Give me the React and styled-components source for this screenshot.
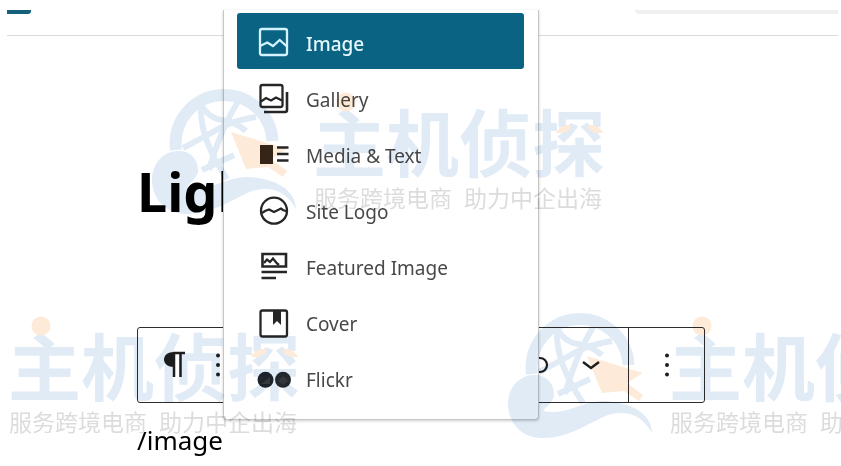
import React from "react";
import styled, { createGlobalStyle, css } from "styled-components";

const GlobalStyle = createGlobalStyle`
  *, *::before, *::after { box-sizing: border-box; }
  body {
    margin: 0;
    background: #fff;
    color: #1e1e1e;
    font-family: "Noto Sans", "Open Sans", sans-serif;
  }
`;

const Page = styled.div`
  position: relative;
  min-height: 100vh;
  padding: 10px 3px 0 7px;
  overflow: hidden;
`;

const TopBar = styled.header`
  display: flex;
  justify-content: space-between;
  align-items: flex-start;
  height: 26px;
  border-bottom: 1px solid #dadada;
`;

const InserterEdge = styled.div`
  width: 24px;
  height: 4px;
  background: #17607c;
  border-bottom-right-radius: 3px;
`;

const SearchEdge = styled.div`
  width: 203px;
  height: 4px;
  background: #f0f0f0;
  border-bottom-left-radius: 4px;
`;

const Editor = styled.main`
  display: flex;
  flex-direction: column;
  padding: 120px 133px 0 130px;
`;

const Title = styled.h1`
  margin: 0;
  font-size: 54px;
  line-height: 70px;
  font-weight: 700;
  color: #000;
`;

const Toolbar = styled.div`
  display: flex;
  height: 76px;
  margin-top: 101px;
  border: 1px solid #2c2c2c;
  border-radius: 3px;
`;

const ToolGroup = styled.div`
  display: flex;
  flex: ${(p) => (p.$grow ? 1 : "none")};
  ${(p) =>
    p.$divided &&
    css`
      border-left: 1px solid #2c2c2c;
    `}
`;

const ToolButton = styled.button`
  display: flex;
  align-items: center;
  justify-content: center;
  width: ${(p) => p.$width}px;
  padding: 0;
  border: 0;
  background: none;
  color: #1e1e1e;
  margin-left: ${(p) => (p.$push ? "auto" : "0")};
`;

const BlockInput = styled.input`
  width: 100%;
  height: 40px;
  margin-top: 17px;
  padding: 0;
  border: 0;
  outline: 0;
  background: none;
  color: #000;
  font-family: inherit;
  font-size: 26px;
  line-height: 40px;
`;

const Menu = styled.div`
  position: absolute;
  top: 10px;
  left: 223px;
  width: 316px;
  padding: 3px 14px 14px 13px;
  background: #fff;
  border: 1px solid #c6c6c6;
  border-top: 0;
  border-radius: 0 0 4px 4px;
  box-shadow: 0 1px 3px rgba(0, 0, 0, 0.2);
`;

const MenuItem = styled.button`
  display: flex;
  align-items: center;
  gap: 14px;
  width: 100%;
  height: 56px;
  padding: 0 19px;
  border: 0;
  border-radius: 3px;
  background: ${(p) => (p.$active ? "#0b6384" : "transparent")};
  color: ${(p) => (p.$active ? "#e6f8ff" : "#484848")};
  font-family: inherit;
  font-size: 19px;
  font-weight: ${(p) => (p.$active ? 500 : 400)};
  line-height: 26px;
  text-align: left;
`;

const ItemIcon = styled.svg`
  flex: none;
  width: 36px;
  height: 36px;
  color: ${(p) => (p.$active ? "#d3f4ff" : "#262626")};
  fill: none;
  stroke: currentColor;
  stroke-width: 2.3;
`;

const ItemLabel = styled.span`
  padding-top: 6px;
`;

const MarkLayer = styled.div`
  position: absolute;
  inset: 0;
  overflow: hidden;
  pointer-events: none;
`;

const Watermark = styled.div`
  position: absolute;
  top: ${(p) => p.$top}px;
  left: ${(p) => p.$left}px;
  display: flex;
  gap: 16px;
  opacity: 0.85;
  mix-blend-mode: multiply;
`;

const Emblem = styled.svg`
  width: 145px;
  height: 128px;
`;

const Brand = styled.div`
  position: relative;
  display: flex;
  flex-direction: column;
  white-space: nowrap;
  font-family: "Noto Sans CJK SC", sans-serif;
`;

const BrandName = styled.div`
  margin-top: 14px;
  font-size: 73px;
  line-height: 74px;
  font-weight: 700;
  color: #dbe8f5;
`;

const BrandAccents = styled.svg`
  position: absolute;
  top: 0;
  left: 0;
  width: 292px;
  height: 60px;
  fill: #fde7d2;
`;

const Slogan = styled.div`
  display: flex;
  gap: 12px;
  padding-left: 1px;
  margin-top: 5px;
  font-size: 23px;
  line-height: 32px;
  font-weight: 400;
  color: #d6d6d6;
`;

const items = [
  {
    label: "Image",
    icon: (
      <>
        <rect x="4" y="6" width="27" height="26" rx="2" />
        <path d="M4 23 11.3 19.5 17 23 23.7 17 31 23.5" />
      </>
    ),
  },
  {
    label: "Gallery",
    icon: (
      <>
        <rect x="4.5" y="6" width="22" height="22" rx="2" />
        <path d="M5 22.5 10 19 15 21.5 20 18.5 26 21.5" />
        <path d="M31 13V31Q31 33 29 33H8" strokeWidth="2.6" />
      </>
    ),
  },
  {
    label: "Media & Text",
    icon: (
      <>
        <path d="M4 10h13v19H4z" fill="#34281c" stroke="none" />
        <path d="M21 12.5h11.500M21 19h11.500M21 25.500h11.500" />
      </>
    ),
  },
  {
    label: "Site Logo",
    icon: (
      <>
        <circle cx="18" cy="19.700" r="13" />
        <path d="M6 22 9 20 13 18.500 18 21 25 17.500 27 19 31 20.500" />
      </>
    ),
  },
  {
    label: "Featured Image",
    icon: (
      <>
        <path d="M6.500 7H30v12.500H6.500z" strokeWidth="2.600" />
        <path d="M8 16 11 12.500 14 15 17 11.500 21 16.500 23 18" />
        <path d="M5.500 25H31M5.500 31H20" />
      </>
    ),
  },
  {
    label: "Cover",
    icon: (
      <>
        <rect x="4.500" y="7.500" width="26.500" height="26" rx="2" />
        <path d="M17 8h8v14l-4-4-4 4z" fill="currentColor" stroke="none" />
      </>
    ),
  },
  {
    label: "Flickr",
    icon: (
      <>
        <circle cx="9.500" cy="20.800" r="8" fill="#1f252c" stroke="none" />
        <circle cx="27" cy="20.800" r="8" fill="#262a2f" stroke="none" />
        <path d="M5 25 14 18V25ZM22 22 27 17 32 22 27 26Z" fill="#3c3c3c" stroke="none" />
      </>
    ),
  },
];

const marks = [
  { top: 88, left: 152 },
  { top: 312, left: -153 },
  { top: 312, left: 508 },
];

function MoreDots() {
  return (
    <svg width="12" height="36" viewBox="0 0 12 36" fill="currentColor" aria-hidden="true">
      <circle cx="6" cy="8.500" r="2" />
      <circle cx="6" cy="18" r="2" />
      <circle cx="6" cy="27.500" r="2" />
    </svg>
  );
}

function BrandMark({ top, left }) {
  return (
    <Watermark $top={top} $left={left}>
      <Emblem viewBox="0 0 145 128" aria-hidden="true">
        <g fill="none" stroke="#dbe8f5">
          <path d="M24 62A48.500 48.500 0 1 1 120.500 53" strokeWidth="12" />
          <g strokeWidth="6">
            <path d="M49 19C48 42 58 66 75 91" />
            <path d="M49 17Q58 31 70 32T94 43" />
            <path d="M88 10Q68 42 57 82" />
            <path d="M31 60Q56 47 68 40T104 29" />
            <path d="M50 82 82 67" />
          </g>
        </g>
        <path
          d="M0 92C0 74 13 62 28 63C39 63 47 73 46 84C44 91 39 94 35 99C60 104 72 89 96 89C123 90 144 102 144 121C133 101 116 98 100 103C78 112 62 126 34 126C13 126 0 110 0 92Z"
          fill="#dbe8f5"
        />
        <path d="M79 44 135 61 119 71 135 83 131 89 116 79 94 81Z" fill="#fde7d2" />
      </Emblem>
      <Brand>
        <BrandName>主机侦探</BrandName>
        <BrandAccents viewBox="0 0 292 60" aria-hidden="true">
          <circle cx="33" cy="14" r="9.500" />
          <path d="M243 45Q249 34 259 38Q256 46 243 45ZM290 45Q284 34 274 38Q277 46 290 45Z" />
        </BrandAccents>
        <Slogan>
          <span>服务跨境电商</span>
          <span>助力中企出海</span>
        </Slogan>
      </Brand>
    </Watermark>
  );
}

export default function App() {
  return (
    <Page>
      <GlobalStyle />
      <TopBar>
        <InserterEdge />
        <SearchEdge />
      </TopBar>

      <Editor>
        <Title>Light</Title>
        <Toolbar role="toolbar" aria-label="Block tools">
          <ToolGroup $grow>
            <ToolButton $width={74} aria-label="Paragraph">
              <svg width="24" height="28" viewBox="0 0 24 28" aria-hidden="true">
                <path d="M11 1v15C5 16 1 13 1 8.500S5 1 11 1z" fill="currentColor" />
                <path d="M10 2h12M11 1v25M17.500 1v25" fill="none" stroke="currentColor" strokeWidth="2.500" />
              </svg>
            </ToolButton>
            <ToolButton $width={12} aria-label="Drag">
              <MoreDots />
            </ToolButton>
            <ToolButton $width={28} $push aria-label="Link">
              <svg width="18" height="18" viewBox="0 0 18 18" fill="none" stroke="currentColor" strokeWidth="2.200" aria-hidden="true">
                <path d="M1 2h8a7 7 0 0 1 0 14H1" />
              </svg>
            </ToolButton>
            <ToolButton $width={74} aria-label="More formatting">
              <svg width="20" height="12" viewBox="0 0 20 12" fill="none" stroke="currentColor" strokeWidth="2.400" aria-hidden="true">
                <path d="M2 3l8 6 8-6" />
              </svg>
            </ToolButton>
          </ToolGroup>
          <ToolGroup $divided>
            <ToolButton $width={75} aria-label="Options">
              <MoreDots />
            </ToolButton>
          </ToolGroup>
        </Toolbar>
        <BlockInput aria-label="Block content" defaultValue="/image" />
      </Editor>

      <Menu role="listbox" aria-label="Blocks">
        {items.map(({ label, icon }, i) => (
          <MenuItem key={label} role="option" aria-selected={i === 0} $active={i === 0}>
            <ItemIcon viewBox="0 0 36 36" $active={i === 0} aria-hidden="true">
              {icon}
            </ItemIcon>
            <ItemLabel>{label}</ItemLabel>
          </MenuItem>
        ))}
      </Menu>

      <MarkLayer>
        {marks.map((mark) => (
          <BrandMark key={mark.left} {...mark} />
        ))}
      </MarkLayer>
    </Page>
  );
}
